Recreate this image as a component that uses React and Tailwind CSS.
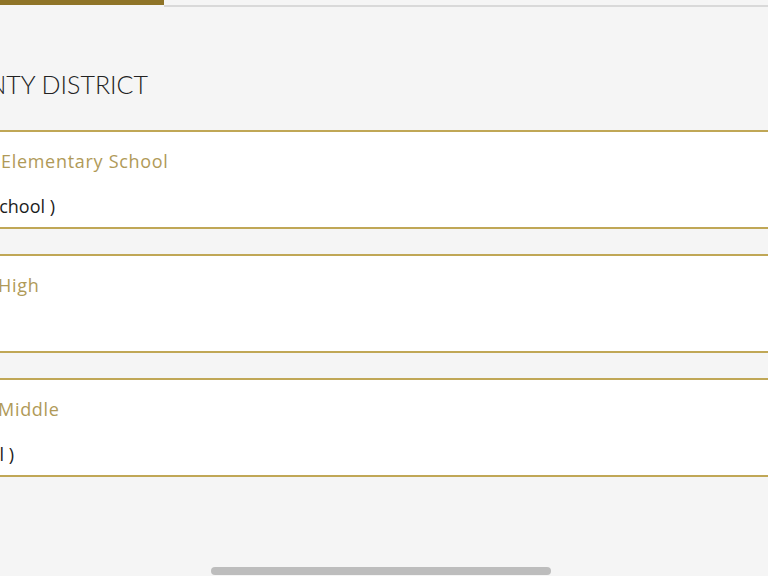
import React from 'react';

const schools = [
  {
    id: 1,
    prefix: 'Lincoln',
    name: 'Elementary School',
    nameShift: 'ml-[1px]',
    sub: '( Lincoln Elementary School )',
    subEnd: 'w-[55px]'
  },
  {
    id: 2,
    prefix: 'Washington',
    name: 'High',
    nameShift: '-ml-[2px]',
    sub: '',
    subEnd: 'w-[0px]'
  },
  {
    id: 3,
    prefix: 'Jefferson',
    name: 'Middle',
    nameShift: '-ml-[2px]',
    sub: '( Jefferson Middle School )',
    subEnd: 'w-[14px]'
  }
];

// Line whose beginning sits off the left edge of the viewport
const ClippedLine = ({ prefix, text, shift, className }) => (
  <div className={`flex whitespace-nowrap ${className}`}>
    <span className="shrink-0 -ml-[300px] w-[300px] text-right">{prefix}</span>
    <span className={shift}>{text}</span>
  </div>
);

// Line anchored by its right end; the rest runs off to the left
const EndAnchoredLine = ({ text, end, className }) => (
  <div className={`flex justify-end ${end} ${className}`}>
    <span className="shrink-0 whitespace-nowrap">{text}</span>
  </div>
);

const SchoolCard = ({ school }) => (
  <div className="bg-white border-t-2 border-b-2 border-t-[#c0a756] border-b-[#c0a756] pt-[16px] pb-[8px]">
    <ClippedLine
      prefix={school.prefix}
      text={school.name}
      shift={school.nameShift}
      className="text-[18px] leading-[26px] tracking-[0.7px] text-[#b09a58]"
    />
    <EndAnchoredLine
      text={school.sub}
      end={school.subEnd}
      className="mt-[19px] h-[26px] text-[18px] leading-[26px] text-[#1c1c1c]"
    />
  </div>
);

export default function App() {
  return (
    <div
      className="relative min-h-[576px] overflow-hidden bg-[#f5f5f5]"
      style={{ fontFamily: '"Open Sans", Lato, sans-serif' }}
    >
      {/* Tab indicator */}
      <div className="flex">
        <div className="w-[164px] h-[5px] bg-[#8f7428]" />
        <div className="flex-1 h-[7px] border-b-2 border-[#d9d9d9]" />
      </div>

      {/* District heading */}
      <EndAnchoredLine
        text="COUNTY DISTRICT"
        end="w-[148px]"
        className="mt-[62px] h-[30px] text-[25px] leading-[30px] font-light text-[#222222] font-['Lato',sans-serif]"
      />

      {/* School list */}
      <div className="mt-[31px] flex flex-col gap-[25px]">
        {schools.map(school => (
          <SchoolCard key={school.id} school={school} />
        ))}
      </div>

      {/* Scroll indicator */}
      <div className="absolute left-[211px] bottom-[1px] w-[340px] h-[8px] rounded-full bg-[#bdbdbd]" />
    </div>
  );
}
